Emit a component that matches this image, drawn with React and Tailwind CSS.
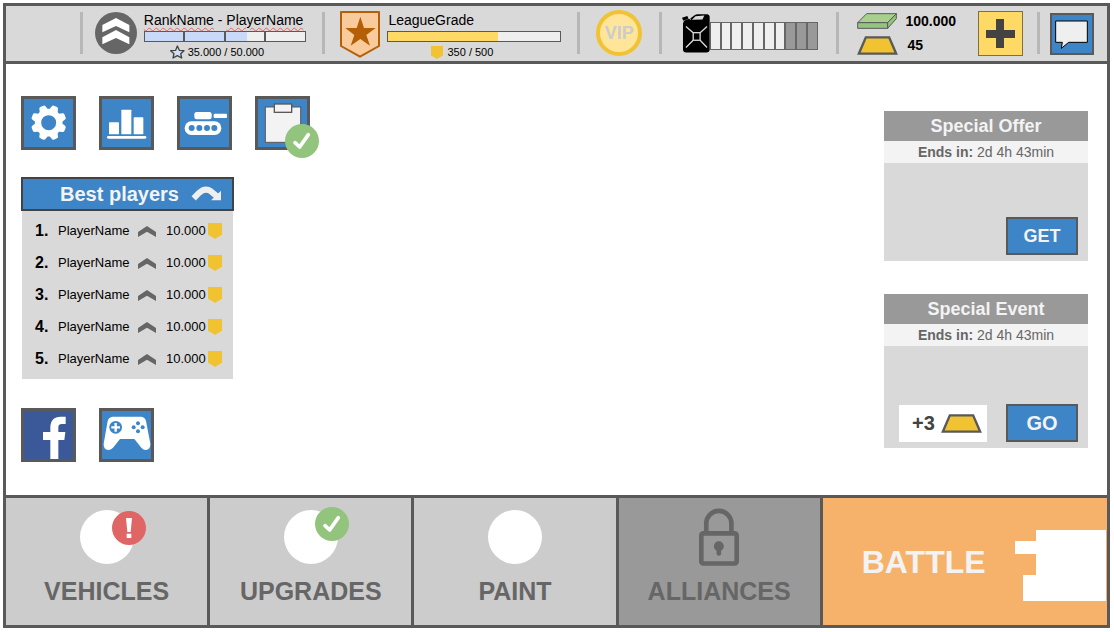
import clsx from 'clsx';

const players = [
  { rank: 1, name: 'PlayerName', score: '10.000' },
  { rank: 2, name: 'PlayerName', score: '10.000' },
  { rank: 3, name: 'PlayerName', score: '10.000' },
  { rank: 4, name: 'PlayerName', score: '10.000' },
  { rank: 5, name: 'PlayerName', score: '10.000' },
];

const rankSteps = [100, 100, 55, 0];
const FUEL_MAX = 10;
const fuel = 7;

function RankBadge() {
  return (
    <svg viewBox="0 0 126 126" className="w-[42px] h-[42px] shrink-0">
      <circle cx="63" cy="63" r="63" fill="#666666" />
      <path d="M22 39 L63 18 L103 39 V61 L63 42 L22 61 Z" fill="#fff" />
      <path d="M22 76 L63 54 L103 76 V97 L63 78 L22 97 Z" fill="#fff" />
    </svg>
  );
}

function LeagueBadge() {
  return (
    <svg viewBox="0 0 120 141" className="w-10 h-[47px] shrink-0">
      <path d="M3 3 H117 V105 L60 137 L3 105 Z" fill="#f9cb9c" stroke="#b45f06" strokeWidth="6" strokeLinejoin="round" />
      <path d="M61 17 L72 51 L107 51 L79 72 L90 104 L61 84 L32 104 L43 72 L16 51 L50 51 Z" fill="#b45f06" />
    </svg>
  );
}

function Shield({ className }) {
  return (
    <svg viewBox="0 0 42 49" preserveAspectRatio="none" className={className}>
      <path d="M0 0 H42 V36 L21 49 L0 36 Z" fill="#f1c232" />
    </svg>
  );
}

function StarIcon() {
  return (
    <svg viewBox="0 0 45 42" className="w-[15px] h-[14px]">
      <path d="M22 3 L28 16 L42 17 L32 26 L35 39 L22 32 L9 39 L12 26 L2 17 L17 16 Z" fill="#cfe2f3" stroke="#434343" strokeWidth="4" strokeLinejoin="round" />
    </svg>
  );
}

function JerryCan() {
  return (
    <svg viewBox="0 0 85 117" className="w-7 h-[39px] shrink-0">
      <path d="M13 16 L24 14 L38 3 Q42 0 48 0 H76 Q84 1 84 9 V106 Q84 116 74 116 H13 Q3 116 3 106 V28 Q4 19 13 16 Z" fill="#000" />
      <path d="M0 11 L16 5 L20 13 L4 20 Z" fill="#000" />
      <path d="M18 4 L26 17" stroke="#d9d9d9" strokeWidth="3" />
      <path d="M30 17 L41 6 L68 4 L62 16 Z" fill="#d9d9d9" />
      <g stroke="#d9d9d9" strokeWidth="4" fill="none">
        <rect x="34" y="56" width="21" height="23" />
        <path d="M12 37 L34 56 M76 37 L55 56 M12 101 L34 79 M76 101 L55 79" />
      </g>
    </svg>
  );
}

function CashIcon() {
  return (
    <svg viewBox="0 0 120 48" className="w-10 h-4">
      <g stroke="#595959" strokeWidth="3" strokeLinejoin="round">
        <path d="M2 29 L29 2 H118 L92 29 Z" fill="#a8d08d" />
        <path d="M2 29 H92 V46 H2 Z" fill="#93c47d" />
        <path d="M92 29 L118 2 V17 L92 46 Z" fill="#93c47d" />
      </g>
    </svg>
  );
}

function GoldIcon() {
  return (
    <svg viewBox="0 0 122 57" className="w-[41px] h-[19px]">
      <path d="M26 4 H96 L117 53 H5 Z" fill="#f1c232" stroke="#595959" strokeWidth="7" />
    </svg>
  );
}

function GearIcon() {
  return (
    <svg viewBox="0 0 147 144" className="w-full h-full">
      <g fill="#fff">
        {[22.5, 67.5, 112.5, 157.5, 202.5, 247.5, 292.5, 337.5].map((a) => (
          <path
            key={a}
            d="M60 36 L64 22 Q65 18 69 18 H79 Q83 18 84 22 L88 36 Z"
            transform={`rotate(${a} 74 71)`}
          />
        ))}
      </g>
      <circle cx="74" cy="71" r="32" fill="none" stroke="#fff" strokeWidth="19" />
    </svg>
  );
}

function StatsIcon() {
  return (
    <svg viewBox="0 0 147 144" className="w-full h-full" fill="#fff">
      <rect x="21" y="70" width="30" height="36" rx="2" />
      <rect x="58" y="32" width="30" height="74" rx="2" />
      <rect x="95" y="55" width="29" height="51" rx="2" />
      <rect x="15" y="111" width="118" height="8" rx="4" />
    </svg>
  );
}

function TankIcon() {
  return (
    <svg viewBox="0 0 147 144" className="w-full h-full" fill="#fff">
      <rect x="43" y="39" width="52" height="22" rx="7" />
      <rect x="101" y="44" width="40" height="13" rx="3" />
      <rect x="14" y="67" width="110" height="41" rx="20" />
      <g fill="#3d85c6">
        <circle cx="35" cy="87" r="9" />
        <circle cx="58" cy="87" r="9" />
        <circle cx="81" cy="87" r="9" />
        <circle cx="103" cy="87" r="9" />
      </g>
    </svg>
  );
}

function ClipboardIcon() {
  return (
    <svg viewBox="0 0 147 144" className="w-full h-full" fill="#f3f3f3" stroke="#595959" strokeWidth="3">
      <rect x="22" y="24" width="106" height="106" />
      <rect x="49" y="15" width="52" height="25" strokeWidth="4" />
    </svg>
  );
}

function FacebookIcon() {
  return (
    <svg viewBox="0 0 147 144" className="w-full h-full">
      <path
        d="M79 145 V87 H57 V63 H79 V50 C79 28 91 17 109 17 H125 V39 H114 C105 39 103 43 103 50 V63 H124 L121 87 H103 V145 Z"
        fill="#fff"
      />
    </svg>
  );
}

function GamepadIcon() {
  return (
    <svg viewBox="0 0 147 144" className="w-full h-full">
      <path
        d="M32 17 H118 Q129 18 132 30 L145 98 Q146 116 131 117 Q124 117 118 110 L97 84 H54 L33 110 Q26 117 19 117 Q4 116 5 98 L17 30 Q20 18 32 17 Z"
        fill="#fff"
      />
      <circle cx="41" cy="49" r="19" fill="#3d85c6" />
      <path d="M41 36 V62 M28 49 H54" stroke="#fff" strokeWidth="7" />
      <g fill="#3d85c6">
        <circle cx="108" cy="37" r="6" />
        <circle cx="95" cy="49" r="6" />
        <circle cx="122" cy="49" r="6" />
        <circle cx="108" cy="61" r="6" />
      </g>
    </svg>
  );
}

function CheckBadge({ className }) {
  return (
    <svg viewBox="0 0 102 102" className={clsx('absolute w-[34px] h-[34px]', className)}>
      <circle cx="51" cy="51" r="51" fill="#93c47d" />
      <path d="M30 56 L44 69 L70 32" fill="none" stroke="#fff" strokeWidth="11" strokeLinecap="round" strokeLinejoin="round" />
    </svg>
  );
}

function AlertBadge({ className }) {
  return (
    <svg viewBox="0 0 102 102" className={clsx('absolute w-[34px] h-[34px]', className)}>
      <circle cx="51" cy="51" r="51" fill="#e06666" />
      <path d="M42 21 H60 L56 63 H46 Z M44 68 H58 V81 H44 Z" fill="#fff" />
    </svg>
  );
}

function LockIcon() {
  return (
    <svg viewBox="0 0 121 174" className="w-10 h-[58px]" fill="none" stroke="#666666" strokeWidth="14">
      <rect x="7" y="76" width="107" height="91" rx="6" />
      <path d="M22 72 V46 A38 38 0 0 1 98 46 V72" />
      <circle cx="60" cy="115" r="15" fill="#666666" stroke="none" />
      <path d="M60 118 V137" strokeLinecap="round" />
    </svg>
  );
}

function TankSilhouette() {
  return (
    <svg viewBox="0 0 91 71" className="mt-2 w-[91px] h-[71px] shrink-0">
      <path d="M21 0 H91 V71 H8 V45 H21 V24 H0 V11 H21 Z" fill="#fff" />
    </svg>
  );
}

function Divider() {
  return <div className="w-[3px] h-[42px] mt-1.5 bg-[#b7b7b7]" />;
}

function IconButton({ label, className, children }) {
  return (
    <button
      type="button"
      aria-label={label}
      className={clsx('relative w-[55px] h-[54px] border-3 border-[#595959]', className || 'bg-[#3d85c6]')}
    >
      {children}
    </button>
  );
}

function TopBar() {
  return (
    <header className="grid h-[58px] grid-cols-[74fr_auto_240fr_auto_252fr_auto_79fr_auto_175fr_auto_198fr_auto_67fr] border-b-3 border-[#595959] bg-[#d9d9d9]">
      <div />
      <Divider />

      {/* Rank */}
      <div className="flex items-start gap-[7px] pl-3 pt-1.5">
        <RankBadge />
        <div className="w-[162px]">
          <div className="text-sm leading-4 whitespace-nowrap">
            <span className="underline decoration-wavy decoration-[#e06666] decoration-1 underline-offset-2">RankName</span>
            {' - '}
            <span className="underline decoration-wavy decoration-[#e06666] decoration-1 underline-offset-2">PlayerName</span>
          </div>
          <div className="mt-[3px] flex h-[11px] gap-[2px] border border-[#595959] bg-[#595959]">
            {rankSteps.map((value, i) => (
              <div key={i} className="flex-1 bg-[#efefef]">
                <div className="h-full bg-[#c9daf8]" style={{ width: `${value}%` }} />
              </div>
            ))}
          </div>
          <div className="mt-[3px] flex items-center justify-center gap-[3px] pr-4 text-[11px] leading-[14px]">
            <StarIcon />
            35.000 / 50.000
          </div>
        </div>
      </div>
      <Divider />

      {/* League */}
      <div className="flex items-start gap-[7px] pl-[15px] pt-[5px]">
        <LeagueBadge />
        <div className="w-[174px] pt-px">
          <div className="px-px text-sm leading-4">LeagueGrade</div>
          <div className="mt-[3px] h-[11px] border border-[#595959] bg-[#efefef]">
            <div className="h-full bg-[#ffd966]" style={{ width: '64%' }} />
          </div>
          <div className="mt-[3px] flex items-center justify-center gap-1 pr-6 text-[11px] leading-[14px]">
            <Shield className="w-3 h-[13px]" />
            350 / 500
          </div>
        </div>
      </div>
      <Divider />

      <div className="flex items-start justify-center pt-1">
        <div className="flex w-[46px] h-[46px] items-center justify-center rounded-full border-4 border-[#f1c232] bg-[#ffe599] text-lg font-bold text-[#cccccc]">
          VIP
        </div>
      </div>
      <Divider />

      {/* Fuel */}
      <div className="flex items-start pl-5 pt-2">
        <JerryCan />
        <div className="mt-2 flex w-[108px] h-7">
          {Array.from({ length: FUEL_MAX }, (_, i) => (
            <div key={i} className={clsx('flex-1 border border-[#666666]', i < fuel ? 'bg-[#efefef]' : 'bg-[#999999]')} />
          ))}
        </div>
      </div>
      <Divider />

      {/* Money */}
      <div className="flex items-start justify-between pl-[18px] pr-3.5 pt-[5px]">
        <div className="text-sm font-bold">
          <div className="flex h-5 items-center gap-2">
            <CashIcon />
            100.000
          </div>
          <div className="mt-0.5 flex h-6 items-center gap-[9px]">
            <GoldIcon />
            45
          </div>
        </div>
        <button type="button" aria-label="Buy" className="w-[45px] h-[45px] border border-[#7f6f3f] bg-[#ffd966]">
          <svg viewBox="0 0 43 43" className="w-full h-full">
            <path d="M21 7 V36 M7 22 H36" stroke="#434343" strokeWidth="8" />
          </svg>
        </button>
      </div>
      <Divider />

      <div className="flex items-start justify-center pt-[7px] pr-1">
        <button type="button" aria-label="Chat" className="w-11 h-[42px] border-2 border-[#595959] bg-[#3d85c6]">
          <svg viewBox="0 0 120 114" className="w-full h-full">
            <path d="M11 18 H106 V82 H50 L28 100 L31 82 H11 Z" fill="#efefef" stroke="#000" strokeWidth="3" />
          </svg>
        </button>
      </div>
    </header>
  );
}

function BestPlayers() {
  return (
    <section className="mt-[27px] w-[213px]">
      <button
        type="button"
        className="flex w-full h-[34px] items-center justify-end gap-3 border-2 border-[#434343] bg-[#3d85c6] pr-2.5 text-xl leading-6 font-bold text-[#f3f3f3]"
      >
        Best players
        <svg viewBox="0 0 93 48" className="w-[31px] h-4">
          <path d="M8 37 L24 21 Q42 4 60 16 L78 31" fill="none" stroke="#efefef" strokeWidth="18" />
          <path d="M90 14 V43 H60 Z" fill="#efefef" />
        </svg>
      </button>
      <div className="mx-px bg-[#d9d9d9] py-1">
        <table className="w-full text-[13px]">
          <tbody>
            {players.map((p) => (
              <tr key={p.rank} className="h-8">
                <td className="w-9 pl-[13px] text-base font-bold">{p.rank}.</td>
                <td className="w-20">{p.name}</td>
                <td className="w-7">
                  <svg viewBox="0 0 54 33" className="w-[18px] h-[11px]">
                    <path d="M0 18 L27 0 L54 18 V33 L27 17 L0 33 Z" fill="#666666" />
                  </svg>
                </td>
                <td>{p.score}</td>
                <td className="w-[25px]">
                  <Shield className="w-3.5 h-4" />
                </td>
              </tr>
            ))}
          </tbody>
        </table>
      </div>
    </section>
  );
}

function PromoCard({ title, className, children }) {
  return (
    <section className={clsx('flex flex-col bg-[#d9d9d9]', className)}>
      <h2 className="bg-[#999999] text-center text-lg leading-[30px] font-bold text-[#f3f3f3]">{title}</h2>
      <p className="bg-[#f3f3f3] text-center text-sm leading-[22px] text-[#666666]">
        <b>Ends in:</b> 2d 4h 43min
      </p>
      <div className="mt-auto flex items-center justify-end gap-[19px] px-2.5 pb-1.5">{children}</div>
    </section>
  );
}

function NavButton({ label, locked, children }) {
  return (
    <button
      type="button"
      className={clsx(
        'flex flex-col items-center text-[25px] leading-7 font-bold text-[#666666]',
        locked ? 'bg-[#999999] pt-2.5' : 'bg-[#cccccc] pt-3'
      )}
    >
      {children}
      <span className={locked ? 'mt-[11px]' : 'mt-[13px]'}>{label}</span>
    </button>
  );
}

function Disc({ children }) {
  return <span className="relative block w-[54px] h-[54px] rounded-full bg-white">{children}</span>;
}

export default function App() {
  return (
    <div className="flex min-h-screen bg-white pt-[3px] pr-1 pb-1 pl-[3px] font-['Liberation_Sans',Arial,sans-serif] text-black">
      <div className="flex flex-1 flex-col border-3 border-[#595959]">
        <TopBar />

        <main className="flex flex-1 items-start justify-between pr-[19px] pl-[15px]">
          <div className="py-8">
            <div className="flex gap-[23px]">
              <IconButton label="Settings"><GearIcon /></IconButton>
              <IconButton label="Statistics"><StatsIcon /></IconButton>
              <IconButton label="Garage"><TankIcon /></IconButton>
              <IconButton label="Missions">
                <ClipboardIcon />
                <CheckBadge className="left-[27px] top-[25px]" />
              </IconButton>
            </div>
            <BestPlayers />
            <div className="mt-[29px] flex gap-[23px]">
              <IconButton label="Facebook" className="bg-[#3b5998]"><FacebookIcon /></IconButton>
              <IconButton label="Games"><GamepadIcon /></IconButton>
            </div>
          </div>

          <aside className="flex w-[204px] flex-col gap-[33px] pt-[47px]">
            <PromoCard title="Special Offer" className="min-h-[150px]">
              <button type="button" className="w-[72px] h-[38px] border-2 border-[#595959] bg-[#3d85c6] text-lg font-bold text-[#f3f3f3]">
                GET
              </button>
            </PromoCard>
            <PromoCard title="Special Event" className="min-h-[154px]">
              <div className="flex w-[88px] h-[37px] items-center justify-center gap-1.5 bg-white pl-2 text-xl font-bold text-[#434343]">
                +3
                <GoldIcon />
              </div>
              <button type="button" className="w-[72px] h-[38px] border-2 border-[#595959] bg-[#3d85c6] text-xl font-bold text-[#f3f3f3]">
                GO
              </button>
            </PromoCard>
          </aside>
        </main>

        {/* Bottom navigation */}
        <nav className="grid h-[130px] grid-cols-[201fr_201fr_201fr_201fr_284fr] gap-[3px] border-t-3 border-[#595959] bg-[#595959]">
          <NavButton label="VEHICLES">
            <Disc><AlertBadge className="left-8 top-px" /></Disc>
          </NavButton>
          <NavButton label="UPGRADES">
            <Disc><CheckBadge className="left-[31px] -top-[3px]" /></Disc>
          </NavButton>
          <NavButton label="PAINT">
            <Disc />
          </NavButton>
          <NavButton label="ALLIANCES" locked>
            <LockIcon />
          </NavButton>
          <button
            type="button"
            className="flex items-center justify-between bg-[#f6b26b] pr-px pl-[39px] text-[32px] leading-8 font-bold text-[#f3f3f3]"
          >
            BATTLE
            <TankSilhouette />
          </button>
        </nav>
      </div>
    </div>
  );
}
